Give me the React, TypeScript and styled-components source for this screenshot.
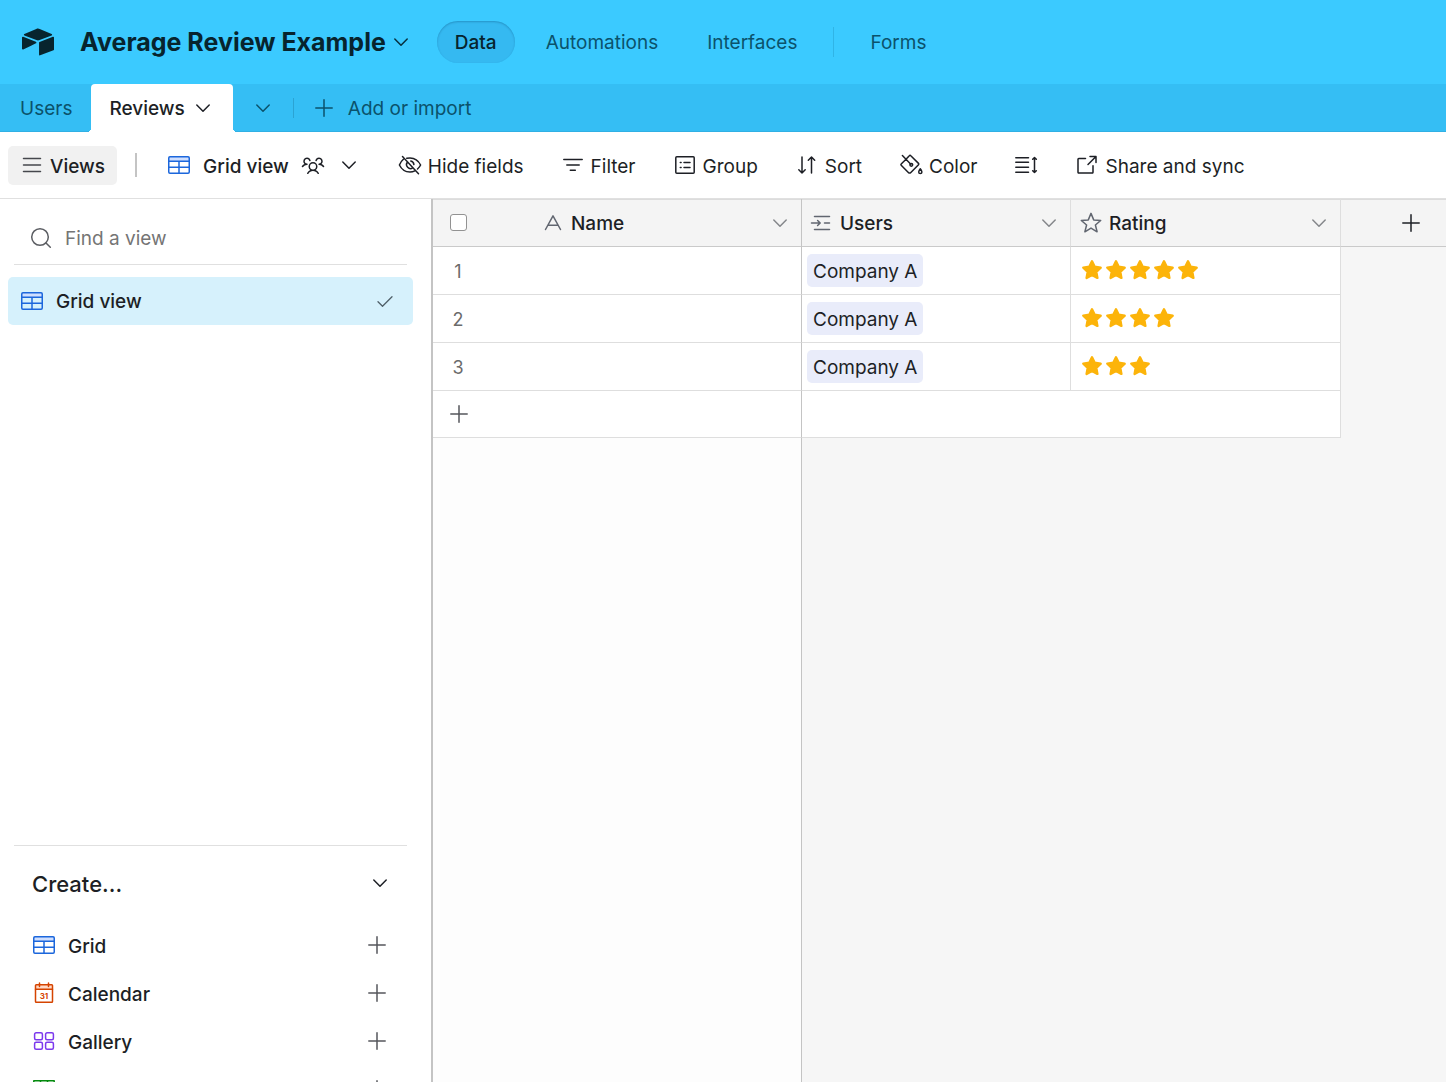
import React from "react";
import styled, { createGlobalStyle } from "styled-components";
import { PiUsersThree } from "react-icons/pi";

const GlobalStyle = createGlobalStyle`
  *, *::before, *::after { box-sizing: border-box; }
  body {
    margin: 0;
    background: #fff;
    color: #1d1f25;
    font-family: Inter, "Liberation Sans", sans-serif;
    font-size: 19px;
    line-height: 24px;
  }
  button, input { font: inherit; color: inherit; }
  button { padding: 0; border: 0; background: none; cursor: pointer; white-space: nowrap; }
  a { color: inherit; text-decoration: none; }
  svg { display: block; flex: none; }
`;

/* ---------- icons ---------- */

const Stroke = styled.svg.attrs({ viewBox: "0 0 24 24", "aria-hidden": true })<{ $color?: string; $weight?: number }>`
  width: 24px;
  height: 24px;
  fill: none;
  stroke: ${(p) => p.$color ?? "currentColor"};
  stroke-width: ${(p) => p.$weight ?? 1.5};
  stroke-linecap: round;
  stroke-linejoin: round;
`;

const Chevron = ({ color }: { color?: string }) => (
  <Stroke $color={color}><path d="M5.8 9l6.2 6.2L18.2 9" /></Stroke>
);
const Plus = ({ color }: { color?: string }) => (
  <Stroke $color={color}><path d="M12 3.8v16.4M3.8 12h16.4" /></Stroke>
);
const Menu = () => <Stroke $color="#45474c"><path d="M3.5 5.5h17M3.5 12h17M3.5 18.5h17" /></Stroke>;
const GridIcon = () => (
  <Stroke $color="#1c67dc">
    <path d="M2 4h20v4H2z" fill="#cfdfff" stroke="none" />
    <rect x="1.75" y="3.75" width="20.5" height="16.5" rx="1.2" />
    <path d="M2 8.3h20M2 14.3h20M12 8.3v12" />
  </Stroke>
);
const HiddenEye = () => (
  <Stroke>
    <path d="M5.4 6.3C3.500 7.900 2.200 10 1.400 12c2.200 4.500 6 7 10.600 7 1.800 0 3.400-.4 4.900-1.100M8.800 5.300c1-.2 2.100-.4 3.200-.4 4.600 0 8.400 2.600 10.600 7.100-.8 1.600-1.900 2.900-3.100 4" />
    <path d="M9.300 9.200a4 4 0 0 0 5.400 5.700M12.800 8.100a4 4 0 0 1 3.100 3.500M4.500 3.500l16 17.200" />
  </Stroke>
);
const FilterIcon = () => <Stroke><path d="M2.800 6.500h18.400M5.800 12h12.400M9.300 17.300h5" /></Stroke>;
const GroupIcon = () => (
  <Stroke>
    <rect x="2.800" y="3.800" width="18.400" height="16.400" rx="1" />
    <path d="M11 9.500h6M11 14.500h6M7.300 9.500h.8M7.300 14.500h.8" />
  </Stroke>
);
const SortIcon = () => <Stroke><path d="M7 4v16M3.800 16.800L7 20l3.200-3.200M16.500 20V4M13.300 7.200l3.200-3.200 3.200 3.200" /></Stroke>;
const BucketIcon = () => (
  <Stroke>
    <path d="M3.400 2.600l8.400 8.600M7 6.200l3.300-3.500a1 1 0 0 1 1.500 0l7.700 7.700a1 1 0 0 1 0 1.400l-7.900 7.900a1.400 1.400 0 0 1-2 0L2.200 12.300a1 1 0 0 1 0-1.400L7 6.200" />
    <circle cx="12.300" cy="11.800" r="1.400" />
    <path d="M21.300 15.800c1 1.300 1.600 2.300 1.600 3.200a1.600 1.600 0 0 1-3.200 0c0-.9.6-1.900 1.600-3.200z" />
  </Stroke>
);
const RowHeight = () => (
  <Stroke><path d="M1.800 4.700H14.500M1.800 9.300H14.500M1.800 14.300H14.500M1.800 19.200H14.500M20.500 4.500v15M18.700 6.300l1.800-1.800 1.800 1.800M18.700 17.700l1.800 1.800 1.800-1.800" /></Stroke>
);
const ShareIcon = () => (
  <Stroke><path d="M10.500 5.500H3.800a.8.800 0 0 0-.8.800v13a.8.800 0 0 0 .8.800h13.400a.8.800 0 0 0 .8-.8v-6.500M15 3.500h6v6M13 11.500l8-8" /></Stroke>
);
const SearchIcon = () => (
  <Stroke $color="#5c5e63"><circle cx="11" cy="11" r="8.300" /><path d="M17 17l4.300 4.300" /></Stroke>
);
const CheckIcon = () => <Stroke $color="#4f5f68" $weight={1.3}><path d="M5 12.800l4.500 4.400L19 7.700" /></Stroke>;
const TextField = () => <Stroke $color="#616670"><path d="M4.500 18.500L12 4.800l7.500 13.700M7 14.200h10" /></Stroke>;
const LinkField = () => (
  <Stroke $color="#616670"><path d="M4.500 5.500h15M14.500 12h5M4.500 18.500h15M1.500 12h8.500M7.600 9.500L10.200 12l-2.600 2.500" /></Stroke>
);
const StarField = () => (
  <Stroke $color="#616670">
    <path d="M12 2.400l2.700 6.500 7 .6-5.300 4.500 1.700 6.800-6.100-3.700-6.100 3.700 1.700-6.800-5.300-4.500 7-.6z" />
  </Stroke>
);
const RatingStar = styled(Stroke).attrs({ $color: "#fcb40a", $weight: 2.4 })`
  fill: #fcb40a;
`;
const Digits = styled.text`
  fill: #d54401;
  stroke: none;
  font: 700 8px Inter, sans-serif;
  text-anchor: middle;
`;
const CalendarIcon = () => (
  <Stroke $color="#d54401">
    <path d="M4 4h16v4H4z" fill="#ffd9c7" stroke="none" />
    <rect x="3.500" y="3.800" width="17" height="17.400" rx=".8" />
    <path d="M3.500 8.300h17M7.500 2v3.500M16.500 2v3.500" />
    <Digits x="12" y="17.500">31</Digits>
  </Stroke>
);
const GalleryIcon = () => (
  <Stroke $color="#7c39ed">
    {[2.6, 13.6].map((x) => [3.8, 13.3].map((y) => (
      <rect key={`${x}-${y}`} x={x} y={y} width="7.800" height="7" rx="1.500" />
    )))}
  </Stroke>
);
const KanbanIcon = () => (
  <Stroke $color="#048a0e">
    <path d="M1.800 3.800h20.400v10h-6.500v-2.500H8.500v8.900H1.800zM8.500 4v8M15.500 4v8M2 7.500h20" />
  </Stroke>
);
const Logo = styled.svg.attrs({ viewBox: "0 0 24 24", "aria-hidden": true })`
  width: 32px;
  height: 32px;
  fill: #07242e;
`;

/* ---------- top bar ---------- */

const Page = styled.div`
  display: flex;
  flex-direction: column;
  height: 100vh;
  overflow: hidden;
`;
const TopBar = styled.header`
  display: flex;
  align-items: center;
  flex: none;
  height: 84px;
  padding: 0 22px;
  background: #3bcaff;
`;
const BaseTitle = styled.h1`
  margin: 0 0 0 26px;
  font-size: 25px;
  line-height: 32px;
  font-weight: 700;
  color: #07242e;
  white-space: nowrap;
`;
const BaseMenu = styled.button`
  margin: 0 24px 0 3px;
  color: #07303f;
`;
const Nav = styled.nav`
  display: flex;
  align-items: center;
  gap: 13px;
`;
const NavLink = styled.a<{ $active?: boolean }>`
  padding: 10px 18px 8px;
  border-radius: 21px;
  color: ${(p) => (p.$active ? "#07242e" : "#0b526b")};
  background: ${(p) => (p.$active ? "#35b9f1" : "transparent")};
  box-shadow: ${(p) => (p.$active ? "inset 0 1px 2px rgba(0, 60, 100, 0.3)" : "none")};
  font-weight: ${(p) => (p.$active ? 500 : 400)};
`;
const NavRule = styled.span`
  width: 1px;
  height: 30px;
  margin: 0 5px;
  background: #30b4e6;
`;

/* ---------- table tabs ---------- */

const TabBar = styled.div`
  display: flex;
  align-items: center;
  flex: none;
  height: 48px;
  background: #35bef4;
  color: #0b526b;
  box-shadow: inset 0 -1px 0 #31b0e4;
`;
const Tab = styled.button`
  height: 48px;
  padding: 2px 19px 0 20px;
`;
const ActiveTab = styled.button`
  position: relative;
  display: flex;
  align-items: center;
  gap: 6px;
  height: 48px;
  padding: 2px 18px 0;
  border-radius: 4px 4px 0 0;
  background: #fff;
  color: #1d1f25;
  font-weight: 500;
  svg { margin-bottom: 2px; }
  &::before, &::after {
    content: "";
    position: absolute;
    bottom: 0;
    width: 4px;
    height: 4px;
  }
  &::before { right: 100%; background: radial-gradient(circle at 0 0, transparent 4px, #fff 4px); }
  &::after { left: 100%; background: radial-gradient(circle at 100% 0, transparent 4px, #fff 4px); }
`;
const TabList = styled.button`
  margin: 0 18px;
`;
const TabRule = styled.span`
  width: 1px;
  height: 20px;
  background: #2ba3d3;
`;
const AddTable = styled.button`
  display: flex;
  align-items: center;
  gap: 12px;
  margin-left: 18px;
  padding-top: 2px;
  svg { margin-bottom: 2px; }
`;

/* ---------- view toolbar ---------- */

const Toolbar = styled.div`
  display: flex;
  align-items: center;
  flex: none;
  height: 67px;
  padding: 0 8px;
  border-bottom: 1px solid #e0e0e0;
`;
const ViewsButton = styled.button`
  display: flex;
  align-items: center;
  gap: 6px;
  height: 39px;
  padding: 3px 12px 0;
  border-radius: 5px;
  background: #f1f1f1;
  font-weight: 500;
  svg { margin-bottom: 3px; }
`;
const ToolRule = styled.span`
  width: 2px;
  height: 24px;
  margin: 0 30px 0 18px;
  background: #c4c4c4;
`;
const Tools = styled.div`
  display: flex;
  align-items: center;
  gap: 37px;
`;
const Tool = styled.button<{ $roomy?: boolean }>`
  display: flex;
  align-items: center;
  gap: ${(p) => (p.$roomy ? 12 : 6)}px;
  padding-top: 3px;
  font-weight: ${(p) => (p.$roomy ? 500 : 400)};
  svg { margin-bottom: 3px; }
`;

/* ---------- sidebar ---------- */

const Body = styled.div`
  display: flex;
  flex: 1;
  min-height: 0;
`;
const Sidebar = styled.aside`
  display: flex;
  flex-direction: column;
  flex: none;
  width: 433px;
  border-right: 2px solid #c4c4c4;
  overflow: hidden;
`;
const Search = styled.label`
  display: flex;
  align-items: center;
  gap: 12px;
  flex: none;
  height: 66px;
  margin: 0 24px 12px 14px;
  padding: 14px 15px 0;
  border-bottom: 1px solid #e0e0e0;
  svg { margin-bottom: 2px; }
`;
const SearchInput = styled.input`
  flex: 1;
  min-width: 0;
  padding: 0;
  border: 0;
  outline: 0;
  background: none;
  &::placeholder { color: #757575; opacity: 1; }
`;
const ViewList = styled.div`
  flex: 1;
  padding: 0 18px 0 8px;
`;
const ViewItem = styled.button`
  display: flex;
  align-items: center;
  gap: 12px;
  width: 100%;
  height: 48px;
  padding: 2px 16px 0 12px;
  border-radius: 5px;
  background: #d6f1fc;
  font-weight: 500;
  svg { margin-bottom: 2px; }
`;
const Spring = styled.span`
  flex: 1;
  text-align: left;
`;
const CreatePanel = styled.section`
  flex: 0 0 237px;
  margin: 0 24px 0 14px;
  border-top: 1px solid #e0e0e0;
  overflow: hidden;
`;
const CreateHeading = styled.button`
  display: flex;
  align-items: center;
  width: 100%;
  height: 76px;
  padding: 0 15px 0 18px;
  font-size: 22px;
  font-weight: 500;
  svg { margin-bottom: 3px; }
`;
const CreateItem = styled.button`
  display: flex;
  align-items: center;
  gap: 12px;
  width: 100%;
  height: 48px;
  padding: 2px 18px 0;
  font-weight: 500;
  svg { margin-bottom: 4px; }
`;

/* ---------- grid ---------- */

const Pane = styled.main`
  display: flex;
  flex-direction: column;
  flex: 1;
  min-width: 0;
  overflow: hidden;
  background: #f6f6f6;
`;
const Records = styled.table`
  width: 100%;
  table-layout: fixed;
  border-collapse: separate;
  border-spacing: 0;
`;
const Col = styled.col<{ $width?: number }>`
  width: ${(p) => (p.$width ? `${p.$width}px` : "auto")};
`;
const HeadCell = styled.th<{ $edge?: string }>`
  height: 48px;
  padding: 0;
  background: #f4f4f4;
  border-bottom: 1px solid #cacaca;
  border-right: ${(p) => (p.$edge ? `1px solid ${p.$edge}` : "0")};
  box-shadow: inset 0 1px 0 #dcdcdc;
  font-weight: 500;
  text-align: left;
`;
const FieldHead = styled.div`
  display: flex;
  align-items: center;
  gap: 6px;
  padding: 2px 9px 0 8px;
  svg { margin-bottom: 2px; }
`;
const Cell = styled.td<{ $edge?: string; $tall?: number }>`
  height: ${(p) => p.$tall ?? 48}px;
  padding: 0 0 1px;
  background: #fff;
  border-bottom: 1px solid #dedede;
  border-right: ${(p) => (p.$edge ? `1px solid ${p.$edge}` : "0")};
`;
const Gutter = styled.div`
  display: flex;
  align-items: center;
  justify-content: center;
  width: 50px;
`;
const RowNumber = styled(Gutter)`
  padding-top: 3px;
  color: #6b6b6b;
  font-size: 18px;
`;
const AddRecord = styled.button`
  display: flex;
  justify-content: center;
  width: 52px;
  color: #55575c;
`;
const Tick = styled.input`
  appearance: none;
  width: 17px;
  height: 17px;
  margin: 0;
  border: 1px solid #929292;
  border-radius: 3px;
  background: #fff;
`;
const AddField = styled.button`
  display: flex;
  align-items: center;
  justify-content: center;
  width: 140px;
  height: 47px;
`;
const Pill = styled.div`
  width: fit-content;
  margin-left: 5px;
  padding: 6px 6px 3px;
  border-radius: 5px;
  background: #e9ecfa;
`;
const Stars = styled.div`
  display: flex;
  padding-left: 9px;
`;
const Filler = styled.div`
  flex: 1;
  width: 369px;
  background: #fdfdfd;
  border-right: 1px solid #c4c4c4;
`;

const FROZEN = "#c4c4c4";
const LINE = "#dedede";
const records = [
  { id: 1, company: "Company A", rating: 5 },
  { id: 2, company: "Company A", rating: 4 },
  { id: 3, company: "Company A", rating: 3 },
];
const creatable = [
  { name: "Grid", icon: <GridIcon /> },
  { name: "Calendar", icon: <CalendarIcon /> },
  { name: "Gallery", icon: <GalleryIcon /> },
];

export default function App() {
  return (
    <Page>
      <GlobalStyle />
      <TopBar>
        <Logo>
          <path d="M11.992 1.966c-.434 0-.87.086-1.28.257L1.779 5.917c-.503.208-.49.908.012 1.116l8.982 3.558a3.266 3.266 0 0 0 2.454 0l8.982-3.558c.503-.196.503-.908.012-1.116l-8.957-3.694a3.255 3.255 0 0 0-1.272-.257zM23.4 8.056a.589.589 0 0 0-.222.045l-10.012 3.877a.612.612 0 0 0-.38.564v8.896a.6.6 0 0 0 .821.552L23.62 18.1a.583.583 0 0 0 .38-.551V8.653a.6.6 0 0 0-.6-.596zM.676 8.095a.644.644 0 0 0-.48.19C.086 8.396 0 8.53 0 8.69v8.355c0 .442.515.737.908.54l6.27-3.006.307-.147 2.969-1.436c.466-.22.43-.908-.061-1.092L.883 8.138a.57.57 0 0 0-.207-.044z" />
        </Logo>
        <BaseTitle>Average Review Example</BaseTitle>
        <BaseMenu aria-label="Base menu"><Chevron /></BaseMenu>
        <Nav>
          <NavLink href="#data" $active>Data</NavLink>
          <NavLink href="#automations">Automations</NavLink>
          <NavLink href="#interfaces">Interfaces</NavLink>
          <NavRule />
          <NavLink href="#forms">Forms</NavLink>
        </Nav>
      </TopBar>

      <TabBar>
        <Tab>Users</Tab>
        <ActiveTab>Reviews<Chevron /></ActiveTab>
        <TabList aria-label="All tables"><Chevron /></TabList>
        <TabRule />
        <AddTable><Plus />Add or import</AddTable>
      </TabBar>

      <Toolbar>
        <ViewsButton><Menu />Views</ViewsButton>
        <ToolRule />
        <Tools>
          <Tool $roomy><GridIcon />Grid view<PiUsersThree size={24} /><Chevron /></Tool>
          <Tool><HiddenEye />Hide fields</Tool>
          <Tool><FilterIcon />Filter</Tool>
          <Tool><GroupIcon />Group</Tool>
          <Tool><SortIcon />Sort</Tool>
          <Tool><BucketIcon />Color</Tool>
          <Tool aria-label="Row height"><RowHeight /></Tool>
          <Tool><ShareIcon />Share and sync</Tool>
        </Tools>
      </Toolbar>

      <Body>
        <Sidebar>
          <Search>
            <SearchIcon />
            <SearchInput type="text" placeholder="Find a view" aria-label="Find a view" />
          </Search>
          <ViewList>
            <ViewItem><GridIcon /><Spring>Grid view</Spring><CheckIcon /></ViewItem>
          </ViewList>
          <CreatePanel>
            <CreateHeading><Spring>Create...</Spring><Chevron /></CreateHeading>
            {creatable.map((item) => (
              <CreateItem key={item.name}>
                {item.icon}<Spring>{item.name}</Spring><Plus color="#55575c" />
              </CreateItem>
            ))}
            <CreateItem aria-label="Kanban"><KanbanIcon /><Spring /><Plus color="#55575c" /></CreateItem>
          </CreatePanel>
        </Sidebar>

        <Pane>
          <Records>
            <colgroup>
              <Col $width={100} /><Col $width={269} /><Col $width={269} /><Col $width={270} /><Col />
            </colgroup>
            <thead>
              <tr>
                <HeadCell><Gutter><Tick type="checkbox" aria-label="Select all" /></Gutter></HeadCell>
                <HeadCell $edge={FROZEN}>
                  <FieldHead><TextField /><Spring>Name</Spring><Chevron color="#85878b" /></FieldHead>
                </HeadCell>
                <HeadCell $edge={LINE}>
                  <FieldHead><LinkField /><Spring>Users</Spring><Chevron color="#85878b" /></FieldHead>
                </HeadCell>
                <HeadCell $edge={LINE}>
                  <FieldHead><StarField /><Spring>Rating</Spring><Chevron color="#85878b" /></FieldHead>
                </HeadCell>
                <HeadCell><AddField aria-label="Add field"><Plus /></AddField></HeadCell>
              </tr>
            </thead>
            <tbody>
              {records.map((r) => (
                <tr key={r.id}>
                  <Cell><RowNumber>{r.id}</RowNumber></Cell>
                  <Cell $edge={FROZEN} />
                  <Cell $edge={LINE}><Pill>{r.company}</Pill></Cell>
                  <Cell $edge={LINE}>
                    <Stars role="img" aria-label={`${r.rating} stars`}>
                      {Array.from({ length: r.rating }, (_, i) => (
                        <RatingStar key={i}>
                          <path d="M12 3.300l2.700 5.500 6 .9-4.400 4.200 1.100 6-5.400-2.900-5.400 2.900 1.100-6-4.400-4.200 6-.9z" />
                        </RatingStar>
                      ))}
                    </Stars>
                  </Cell>
                </tr>
              ))}
              <tr>
                <Cell $tall={47}><AddRecord aria-label="Add record"><Plus /></AddRecord></Cell>
                <Cell $tall={47} $edge={FROZEN} />
                <Cell $tall={47} $edge={LINE} colSpan={2} />
              </tr>
            </tbody>
          </Records>
          <Filler />
        </Pane>
      </Body>
    </Page>
  );
}
